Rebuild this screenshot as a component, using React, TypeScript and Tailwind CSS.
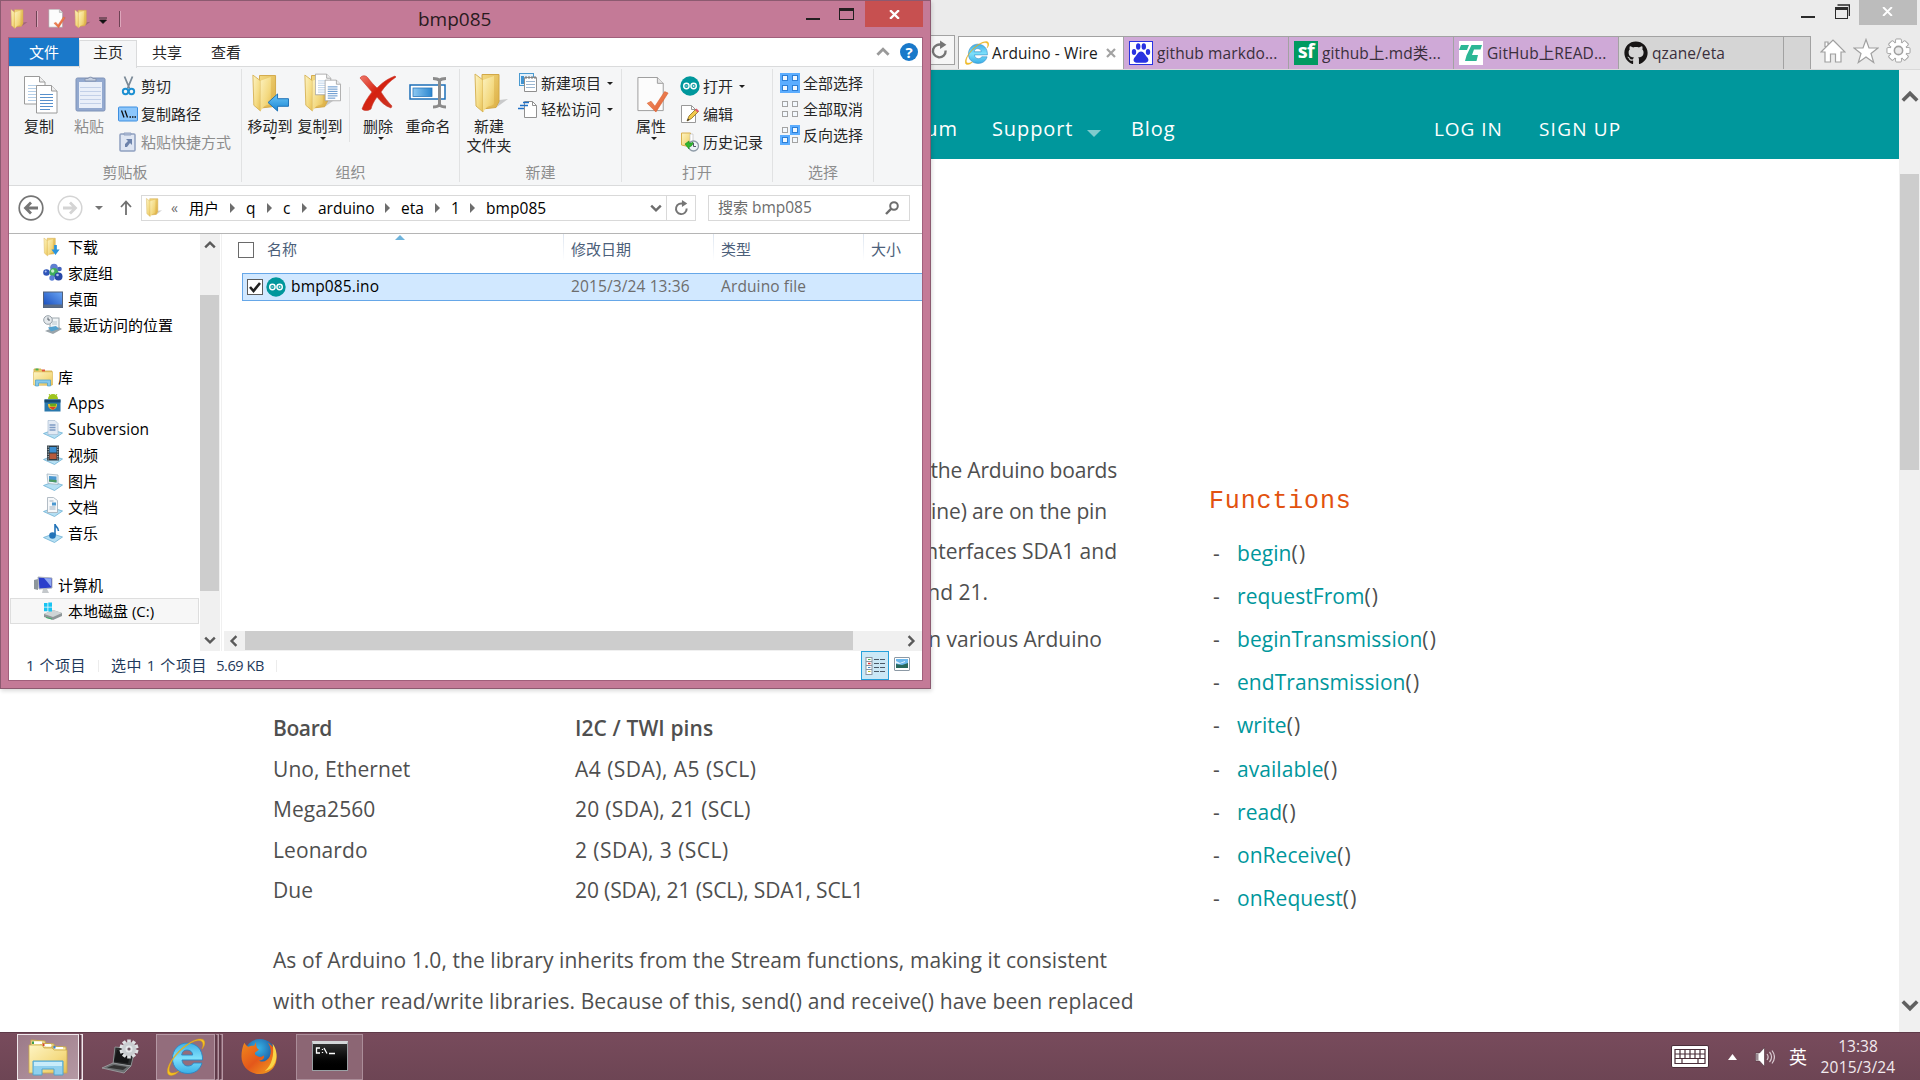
import type { ReactNode } from "react";
import { FaGithub } from "react-icons/fa";

/* ---------- shared gradients ---------- */

function Gradients() {
  return (
    <svg className="absolute h-0 w-0" aria-hidden="true">
      <defs>
        <linearGradient id="gFlap" x1="0" y1="0" x2="1" y2="1">
          <stop offset="0" stopColor="#fdf4c4" />
          <stop offset="0.6" stopColor="#f5dc85" />
          <stop offset="1" stopColor="#e6bf55" />
        </linearGradient>
        <linearGradient id="gBack" x1="0" y1="0" x2="1" y2="1">
          <stop offset="0" stopColor="#f3da84" />
          <stop offset="1" stopColor="#dcae42" />
        </linearGradient>
        <linearGradient id="gBlue" x1="0" y1="0" x2="0" y2="1">
          <stop offset="0" stopColor="#6cc6f7" />
          <stop offset="1" stopColor="#1a86d4" />
        </linearGradient>
        <linearGradient id="gRed" x1="0" y1="0" x2="1" y2="1">
          <stop offset="0" stopColor="#f0796b" />
          <stop offset="0.45" stopColor="#d5210f" />
          <stop offset="1" stopColor="#c93a2a" />
        </linearGradient>
        <linearGradient id="gCheck" x1="0" y1="0" x2="1" y2="1">
          <stop offset="0" stopColor="#f39b6d" />
          <stop offset="1" stopColor="#e0562a" />
        </linearGradient>
        <linearGradient id="gSel" x1="0" y1="0" x2="1" y2="0">
          <stop offset="0" stopColor="#8cc8f2" />
          <stop offset="1" stopColor="#2b86cf" />
        </linearGradient>
        <linearGradient id="gIe" x1="0" y1="0" x2="0" y2="1">
          <stop offset="0" stopColor="#3fb0e8" />
          <stop offset="0.5" stopColor="#7ee0fb" />
          <stop offset="1" stopColor="#39aee6" />
        </linearGradient>
        <linearGradient id="gDesk" x1="0" y1="1" x2="1" y2="0">
          <stop offset="0" stopColor="#1447b8" />
          <stop offset="1" stopColor="#6aa6f5" />
        </linearGradient>
        <linearGradient id="gFox" x1="0" y1="0" x2="1" y2="1">
          <stop offset="0" stopColor="#f08a1c" />
          <stop offset="0.5" stopColor="#e4571b" />
          <stop offset="1" stopColor="#f4a81f" />
        </linearGradient>
        <radialGradient id="gGlobe" cx="0.45" cy="0.3" r="0.8">
          <stop offset="0" stopColor="#35b4e8" />
          <stop offset="1" stopColor="#142c7c" />
        </radialGradient>
      </defs>
    </svg>
  );
}

/* ---------- ribbon and navigation icons ---------- */

function Folder({ className }: { className: string }) {
  return (
    <svg viewBox="0 0 36 40" className={className}>
      <path d="M24 34l11-8-9 1z" fill="#000" opacity="0.18" />
      <path d="M9 1.5h17v27l-3 6L9 36z" fill="url(#gBack)" stroke="#d2a847" strokeWidth="1" />
      <path d="M2 1l8 6v32l-7-6z" fill="url(#gFlap)" stroke="#d8b55a" strokeWidth="1" />
      <path d="M10 7l11-4v27c0 3-4 2-7 4l-4 5z" fill="url(#gFlap)" opacity="0.9" />
    </svg>
  );
}

function Sheet({ x, y, lines }: { x: number; y: number; lines: string }) {
  return (
    <g transform={`translate(${x} ${y})`}>
      <path d="M0.5 0.5h15l5.500 5.500v22h-20.500z" fill="#fff" stroke="#9a9a9a" />
      <path d="M15.500 0.500v5.500h5.500" fill="#eee" stroke="#9a9a9a" />
      <path d="M4 9.500h13M4 12.500h13M4 15.500h13M4 18.500h13M4 21.500h13M4 24.500h10" stroke={lines} strokeWidth="1.200" />
    </g>
  );
}

function CopyIcon() {
  return (
    <svg viewBox="0 0 36 38" className="mt-1 ml-[5px] h-[38px] w-9">
      <Sheet x={0} y={0} lines="#b5cfe8" />
      <Sheet x={12} y={9} lines="#5790cc" />
    </svg>
  );
}

function PasteIcon() {
  return (
    <svg viewBox="0 0 32 38" className="mt-px ml-[3px] h-[38px] w-8">
      <rect x="1" y="3" width="29" height="33" rx="1.500" fill="#93a9cf" stroke="#7f93b8" />
      <rect x="4" y="7" width="23" height="26" fill="#e9eff9" />
      <path d="M5 12.500h21M5 16.500h21M5 20.500h21M5 24.500h21M5 28.500h21" stroke="#c2d0e8" />
      <path d="M10 6V3.500h3a3 3 0 0 1 5 0h3V6z" fill="#c4cfe0" stroke="#8795b0" />
    </svg>
  );
}

function CutIcon() {
  return (
    <svg viewBox="0 0 20 20" className="h-5 w-5">
      <path d="M6.500 0.500l5 12M14.500 0.500l-5 12" stroke="#7b8a97" strokeWidth="1.800" fill="none" />
      <circle cx="7.500" cy="15.500" r="2.700" fill="none" stroke="#1e90d2" strokeWidth="1.900" />
      <circle cx="13.500" cy="15.500" r="2.700" fill="none" stroke="#1e90d2" strokeWidth="1.900" />
    </svg>
  );
}

function PathIcon() {
  return (
    <svg viewBox="0 0 20 20" className="h-5 w-5">
      <rect x="0.500" y="3" width="19" height="14" rx="1" fill="#8cc6fb" stroke="#3d8fe0" />
      <path d="M3.500 6.500l2.500 7M7 6.500l2.500 7" stroke="#111" strokeWidth="1.300" />
      <path d="M11.500 13h1.500M14 13h1.500M16.500 13h1.500" stroke="#111" strokeWidth="1.500" />
    </svg>
  );
}

function PasteShortcutIcon() {
  return (
    <svg viewBox="0 0 20 20" className="h-5 w-5">
      <rect x="2" y="2" width="15" height="17" rx="1" fill="#dfe6f3" stroke="#8fa0c0" strokeWidth="1.500" />
      <path d="M6 3V1h7v2z" fill="#b6c2da" stroke="#8fa0c0" />
      <path d="M7 15v-3l3-3-2-2h6v6l-2-2-3 4z" fill="#6d83ab" />
    </svg>
  );
}

function MoveToIcon() {
  return (
    <span className="relative block h-10 w-[38px]">
      <Folder className="h-10 w-[34px]" />
      <svg viewBox="0 0 24 20" className="absolute top-5 left-4 h-[19px] w-[23px]">
        <path d="M1 10L11 1v5h11.500v8H11v5z" fill="url(#gBlue)" stroke="#1a6fb5" />
      </svg>
    </span>
  );
}

function CopyToIcon() {
  return (
    <span className="relative ml-1 block h-10 w-[38px]">
      <Folder className="h-10 w-[34px]" />
      <svg viewBox="0 0 36 38" className="absolute top-0 left-3 h-[30px] w-[27px]">
        <Sheet x={0} y={0} lines="#b5cfe8" />
        <Sheet x={13} y={8} lines="#4f88c6" />
      </svg>
    </span>
  );
}

function DeleteIcon() {
  return (
    <svg viewBox="0 0 38 36" className="h-9 w-[38px]">
      <path
        d="M1 3c2-3 6-3 8 0 3 4 6 7 9 10C23 8 28 4 36 1l1 1c-6 4-11 9-15 15 4 6 7 10 11 14l-1 2c-6-2-10-6-14-11-3 4-5 8-6 12-3 2-7 2-9 0 2-6 6-12 10-17C9 12 5 8 1 3z"
        fill="url(#gRed)"
        stroke="#c9392b"
        strokeWidth="0.600"
      />
    </svg>
  );
}

function RenameIcon() {
  return (
    <svg viewBox="0 0 38 34" className="h-[34px] w-[38px]">
      <rect x="1" y="9" width="35" height="14" fill="#fff" stroke="#1c6fb8" strokeWidth="1.500" />
      <rect x="4" y="12" width="19" height="8.500" fill="url(#gSel)" stroke="#2b78bb" strokeWidth="0.800" />
      <path d="M24 2.500c3 0 5 0.500 6.500 2 1.500-1.500 3.500-2 6.500-2M24 31c3 0 5-0.500 6.500-2 1.500 1.500 3.500 2 6.500 2M30.500 4v25" fill="none" stroke="#8b8b8b" strokeWidth="3" />
    </svg>
  );
}

function NewItemIcon() {
  return (
    <svg viewBox="0 0 20 20" className="h-5 w-5">
      <rect x="1.500" y="0.500" width="14" height="12" fill="#e3f1fb" stroke="#4a9ad0" />
      <path d="M3 3h3v8H3z" fill="#3f93d1" />
      <path d="M6.500 4.500h12v14h-12z" fill="#fff" stroke="#8f8f8f" />
      <path d="M8 8.500h9M8 11.500h9M8 14.500h9" stroke="#9db8d2" />
      <path d="M8 3v3M11 3v3M14 3v3M17 3v3" stroke="#777" />
    </svg>
  );
}

function EasyAccessIcon() {
  return (
    <svg viewBox="0 0 20 20" className="h-5 w-5">
      <path d="M6.500 2.500h8l4 4v12h-12z" fill="#fff" stroke="#909090" />
      <path d="M14.500 2.500v4h4" fill="none" stroke="#909090" />
      <path d="M5 3.500h6M2 6.500h8M0 9.500h6" stroke="#1e70c8" strokeWidth="1.500" />
    </svg>
  );
}

function PropertiesIcon({ className }: { className: string }) {
  return (
    <svg viewBox="0 0 32 38" className={className}>
      <path d="M0.500 0.500h20l6 6v28h-26z" fill="#fcfcfc" stroke="#9c9c9c" />
      <path d="M20.500 0.500v6h6" fill="#e4e4e4" stroke="#9c9c9c" />
      <path d="M10 27l4-2 4 5 10-15 3.500 1.500L19 36z" fill="url(#gCheck)" stroke="#d9612f" strokeWidth="0.600" />
    </svg>
  );
}

function ArduinoIcon() {
  return (
    <svg viewBox="0 0 20 20" className="h-5 w-5">
      <circle cx="10" cy="10" r="9.700" fill="#00979c" />
      <circle cx="6.400" cy="10" r="2.700" fill="none" stroke="#fff" strokeWidth="1.400" />
      <circle cx="13.600" cy="10" r="2.700" fill="none" stroke="#fff" strokeWidth="1.400" />
      <path d="M5.300 10h2.200M12.500 10h2.200M13.600 8.900v2.200" stroke="#fff" strokeWidth="0.700" />
    </svg>
  );
}

function EditIcon() {
  return (
    <svg viewBox="0 0 20 20" className="h-5 w-5">
      <path d="M1.500 1.500h10l4 4v13h-14z" fill="#fff" stroke="#999" />
      <path d="M11.500 1.500v4h4" fill="none" stroke="#999" />
      <path d="M7 17l2-5 7-7 2.500 2.500-7 7z" fill="#f2c94c" stroke="#8a6a1c" strokeWidth="0.800" />
      <path d="M15 6l1.500-1.500 2.500 2.500L17.500 8.500z" fill="#e0556b" />
      <path d="M7 17l1-2.500 1.500 1.500z" fill="#333" />
    </svg>
  );
}

function HistoryIcon() {
  return (
    <svg viewBox="0 0 20 20" className="h-5 w-5">
      <path d="M1.500 1h9v14l-9-2z" fill="url(#gFlap)" stroke="#d8b04c" />
      <path d="M10 2h3v8h-3z" fill="#fff" stroke="#bbb" strokeWidth="0.600" />
      <circle cx="13.500" cy="14" r="5" fill="#eef3f7" stroke="#8d9aa6" strokeWidth="1.300" />
      <path d="M13.500 11v3.500h2.500" fill="none" stroke="#556" />
      <path d="M5 12l4-3v2c2 0 3 0 4-1 0 3-1.500 4.500-4 5v2z" fill="#2fb52f" stroke="#188a18" strokeWidth="0.600" />
    </svg>
  );
}

function SelectIcon({ on }: { on: boolean[] }) {
  const cells = [
    [0, 0],
    [10, 0],
    [0, 10],
    [10, 10],
  ];
  return (
    <svg viewBox="0 0 20 20" className="h-5 w-5">
      {cells.map(([x, y], i) => (
        <g key={i} transform={`translate(${x} ${y})`}>
          {on[i] && <rect width="10" height="10" fill="#5cadff" />}
          <rect x="2.500" y="2.500" width="5" height="5" fill="#f3f8fd" stroke={on[i] ? "#2d7fd6" : "#a3a3a3"} />
        </g>
      ))}
    </svg>
  );
}

function DownloadsIcon() {
  return (
    <span className="relative block h-5 w-5">
      <Folder className="h-5 w-[17px]" />
      <svg viewBox="0 0 10 12" className="absolute top-[7px] left-2 h-3 w-[9px]">
        <path d="M3.500 0.500h3v5h3L5 11.500 0.500 5.500h3z" fill="#2b94dd" />
      </svg>
    </span>
  );
}

function HomegroupIcon() {
  return (
    <svg viewBox="0 0 20 20" className="h-5 w-5">
      <circle cx="11" cy="4.500" r="3.800" fill="#5f7fd0" />
      <circle cx="3.500" cy="9.500" r="3.300" fill="#2f55b8" />
      <circle cx="11" cy="9.500" r="4.500" fill="#3fae5c" />
      <circle cx="9.700" cy="8" r="1.700" fill="#c6efcd" />
      <circle cx="15.500" cy="13.500" r="4" fill="#2747a6" />
      <circle cx="14.500" cy="12" r="1.300" fill="#aebff0" />
      <circle cx="9" cy="15" r="2.700" fill="#5c7fd6" />
      <circle cx="2.700" cy="8.500" r="1" fill="#aebff0" />
      <circle cx="16.500" cy="6" r="2.300" fill="#4262bc" />
    </svg>
  );
}

function DesktopIcon() {
  return (
    <svg viewBox="0 0 20 20" className="h-5 w-5">
      <rect x="0.500" y="3" width="19" height="15.500" fill="url(#gDesk)" stroke="#51617b" />
      <rect x="0.500" y="15.500" width="19" height="3" fill="#5b6c85" />
    </svg>
  );
}

function RecentIcon() {
  return (
    <svg viewBox="0 0 20 20" className="h-5 w-5">
      <path d="M2 16l12-5 5 3-9 5z" fill="#9aa4aa" />
      <rect x="7" y="3" width="9" height="10" fill="#f1f5f7" stroke="#9fa9af" />
      <path d="M9 7h5M9 9h5" stroke="#b9c6cd" />
      <path d="M5 12.500l8-1.500 3 3-8 2.500z" fill="#54a2cf" />
      <circle cx="5" cy="5" r="4.300" fill="#e5e9ec" stroke="#96a0a8" />
      <path d="M5 2.500V5h2" fill="none" stroke="#56616a" />
    </svg>
  );
}

function LibraryIcon() {
  return (
    <svg viewBox="0 0 20 20" className="h-5 w-5">
      <path d="M1 2h7l1 2h10v14H1z" fill="#eccb6a" stroke="#cfa745" strokeWidth="0.800" />
      <path d="M2.500 1.500h3v2h-3z" fill="#4caf50" />
      <path d="M9 2.500h3v2H9z" fill="#e0533c" />
      <path d="M0.500 5h19v13h-19z" fill="url(#gFlap)" stroke="#dab95c" strokeWidth="0.500" />
      <path d="M2.500 19v-6h15v6h-3v-3h-9v3z" fill="#86c8ea" stroke="#4b9fcd" strokeWidth="0.700" />
    </svg>
  );
}

function AppsIcon() {
  return (
    <svg viewBox="0 0 20 20" className="h-5 w-5">
      <path d="M5 6a5 5 0 0 1 10 0z" fill="#9ec51f" />
      <path d="M6 1l2 3M14 1l-2 3" stroke="#9ec51f" />
      <rect x="1.500" y="6.500" width="16" height="12" fill="#2a78ac" />
      <rect x="1.500" y="6.500" width="16" height="3" fill="#174a70" />
      <path d="M5 11h9c0 4-2 5-4.500 6C7 16 5 15 5 11z" fill="#f2c430" />
      <path d="M6.500 10.500h7l-1 3h-5z" fill="#6aa81e" />
      <path d="M6 14l4 3 3-3z" fill="#d8402c" />
    </svg>
  );
}

function Tray({ children }: { children: ReactNode }) {
  return (
    <svg viewBox="0 0 20 20" className="h-5 w-5">
      <path d="M0.500 14.500l9.500-3.500 9.500 3-8 5.500z" fill="#b5dff3" stroke="#6cb0d4" strokeWidth="0.800" />
      {children}
    </svg>
  );
}

function ComputerIcon() {
  return (
    <svg viewBox="0 0 20 20" className="h-5 w-5">
      <path d="M1 5l4-1v11l-4-1z" fill="#8e979c" />
      <path d="M5 2l14 1v10l-13 1z" fill="#2a3ecb" stroke="#b2b7bd" />
      <path d="M11 3l7 0.500v8z" fill="#8ea7f3" />
      <path d="M10 14h4l2 4H9z" fill="#c4c8cb" />
    </svg>
  );
}

function DriveIcon() {
  return (
    <svg viewBox="0 0 20 20" className="h-5 w-5">
      <path d="M1 13l9-4 9 3v3l-9 4-9-3z" fill="#8e9698" />
      <path d="M1 13l9-4 9 3-9 4z" fill="#cfd5d6" />
      <path d="M3 16l6 1.500v1L3 17z" fill="#3fae6a" />
      <path d="M1 2h3.500v3.800H1zM5.300 1.500H9v4.300H5.300zM1 6.600h3.500v3.600H1zM5.300 6.600H9v4H5.300z" fill="#18c4f2" />
    </svg>
  );
}

/* ---------- small glyphs ---------- */

function Chevron({ d, className }: { d: "up" | "down" | "left" | "right"; className: string }) {
  const pts = { up: "1,7 5,3 9,7", down: "1,3 5,7 9,3", left: "7,1 3,5 7,9", right: "3,1 7,5 3,9" }[d];
  return (
    <svg viewBox="0 0 10 10" className={className}>
      <polyline points={pts} fill="none" stroke="currentColor" strokeWidth="2" />
    </svg>
  );
}

function Caret({ className = "" }: { className?: string }) {
  return (
    <svg viewBox="0 0 6 3" className={`h-[3px] w-[6px] ${className}`}>
      <path d="M0 0h6L3 3z" fill="#1e1e1e" />
    </svg>
  );
}

function Crumb() {
  return (
    <svg viewBox="0 0 5 10" className="h-[10px] w-[5px]">
      <path d="M0 0l5 5-5 5z" fill="#6d6d6d" />
    </svg>
  );
}

function Reload({ className }: { className: string }) {
  return (
    <svg viewBox="0 0 16 18" className={className}>
      <path d="M13.800 9.500a6 6 0 1 1-3.300-5" fill="none" stroke="#757575" strokeWidth="2.200" />
      <path d="M8.500 0l6 4-6 4z" fill="#757575" />
    </svg>
  );
}

function IeLogo({ className }: { className: string }) {
  return (
    <svg viewBox="0 0 38 38" className={className}>
      <path
        d="M20 5c9 0 16 6 15.500 17H15c0.500 4 3 6 6 6 2.500 0 4.500-1 5.500-3h8.500c-2 7-7.500 10.500-14 10.500-9 0-15.500-6-15.500-15S12 5 20 5zm0 7c-3 0-5 1.800-5.300 5h11c-0.300-3.200-2.500-5-5.700-5z"
        fill="url(#gIe)"
        stroke="#2a86c4"
        strokeWidth="0.900"
      />
      <path
        d="M35 11c2-5 1-9-4-8.500C24 3 11 13 5 23c-4 7-4 13 1 12 2 0 4-1 6-2-3 4-8 5.500-10.500 3.500C-2 33 3 22 12 13 20 5 31-1 36 1.500c3 2 2 6-1 9.500z"
        fill="#f7c322"
        stroke="#d99c12"
        strokeWidth="0.500"
      />
    </svg>
  );
}

/* ---------- explorer window ---------- */

function BigButton({ icon, lines, caret, muted }: { icon: ReactNode; lines: string[]; caret?: boolean; muted?: boolean }) {
  return (
    <div className={`flex w-[50px] shrink-0 flex-col items-center ${muted ? "text-[#8d8d8d]" : "text-[#262626]"}`}>
      <div className="flex h-10 items-center">{icon}</div>
      <div className="h-1" />
      {lines.map((l) => (
        <div key={l} className="leading-[19px] whitespace-nowrap">
          {l}
        </div>
      ))}
      {caret && <Caret className="mt-px ml-[5px]" />}
    </div>
  );
}

function SmallButton({ icon, label, caret, muted }: { icon: ReactNode; label: string; caret?: boolean; muted?: boolean }) {
  return (
    <div className={`flex h-5 items-center gap-[3px] leading-5 whitespace-nowrap ${muted ? "text-[#8d8d8d]" : "text-[#262626]"}`}>
      {icon}
      <span>{label}</span>
      {caret && <Caret className="ml-[3px]" />}
    </div>
  );
}

function Group({ label, width, children }: { label: string; width: string; children: ReactNode }) {
  return (
    <div className={`flex shrink-0 flex-col pt-1.5 ${width}`}>
      <div className="flex h-[89px]">{children}</div>
      <div className="text-center leading-5 text-[#8d8d8d]">{label}</div>
    </div>
  );
}

function Divider() {
  return <div className="mt-0.5 h-[113px] w-px shrink-0 bg-[#e1e2e3]" />;
}

function Ribbon() {
  return (
    <div className="flex h-[120px] border-y border-[#dadbdc] bg-[#f5f6f7]">
      <Group label="剪贴板" width="w-[232px]">
        <div className="w-[5px]" />
        <BigButton icon={<CopyIcon />} lines={["复制"]} />
        <BigButton icon={<PasteIcon />} lines={["粘贴"]} muted />
        <div className="ml-1 flex flex-col gap-2 pt-[3px]">
          <SmallButton icon={<CutIcon />} label="剪切" />
          <SmallButton icon={<PathIcon />} label="复制路径" />
          <SmallButton icon={<PasteShortcutIcon />} label="粘贴快捷方式" muted />
        </div>
      </Group>
      <Divider />
      <Group label="组织" width="w-[217px]">
        <div className="w-[3px]" />
        <BigButton icon={<MoveToIcon />} lines={["移动到"]} caret />
        <BigButton icon={<CopyToIcon />} lines={["复制到"]} caret />
        <div className="mr-[3px] ml-1 mt-3.5 h-[55px] w-px bg-[#e1e2e3]" />
        <BigButton icon={<DeleteIcon />} lines={["删除"]} caret />
        <BigButton icon={<RenameIcon />} lines={["重命名"]} />
      </Group>
      <Divider />
      <Group label="新建" width="w-[161px]">
        <div className="w-1" />
        <BigButton icon={<Folder className="ml-1 h-10 w-9" />} lines={["新建", "文件夹"]} />
        <div className="ml-1 flex flex-col gap-1.5">
          <SmallButton icon={<NewItemIcon />} label="新建项目" caret />
          <SmallButton icon={<EasyAccessIcon />} label="轻松访问" caret />
        </div>
      </Group>
      <Divider />
      <Group label="打开" width="w-[150px]">
        <div className="w-1" />
        <BigButton icon={<PropertiesIcon className="mt-1 ml-1 h-[37px] w-8" />} lines={["属性"]} caret />
        <div className="ml-1 flex flex-col gap-2 pt-[3px]">
          <SmallButton icon={<ArduinoIcon />} label="打开" caret />
          <SmallButton icon={<EditIcon />} label="编辑" />
          <SmallButton icon={<HistoryIcon />} label="历史记录" />
        </div>
      </Group>
      <Divider />
      <Group label="选择" width="w-[100px]">
        <div className="ml-[7px] flex flex-col gap-1.5">
          <SmallButton icon={<SelectIcon on={[true, true, true, true]} />} label="全部选择" />
          <SmallButton icon={<SelectIcon on={[false, false, false, false]} />} label="全部取消" />
          <SmallButton icon={<SelectIcon on={[false, true, true, false]} />} label="反向选择" />
        </div>
      </Group>
      <Divider />
    </div>
  );
}

const crumbs: [string, string][] = [
  ["用户", "w-[41px]"],
  ["q", "w-[21px]"],
  ["c", "w-[19px]"],
  ["arduino", "w-[67px]"],
  ["eta", "w-[34px]"],
  ["1", "w-[19px]"],
];

function AddressRow() {
  return (
    <div className="flex h-12 shrink-0 items-center border-b border-[#b5b5b5] pb-1 text-black">
      <svg viewBox="0 0 26 26" className="ml-[9px] h-[26px] w-[26px]">
        <circle cx="13" cy="13" r="11.800" fill="none" stroke="#757575" strokeWidth="1.700" />
        <path d="M20 13H8M13 7.500L7.500 13l5.500 5.500" fill="none" stroke="#757575" strokeWidth="2.800" />
      </svg>
      <svg viewBox="0 0 26 26" className="ml-[13px] h-[26px] w-[26px]">
        <circle cx="13" cy="13" r="11.800" fill="none" stroke="#d4d4d4" strokeWidth="1.500" />
        <path d="M6 13h12M13 7.500l5.500 5.500-5.500 5.500" fill="none" stroke="#d4d4d4" strokeWidth="2.800" />
      </svg>
      <svg viewBox="0 0 8 4" className="ml-3 h-1 w-2">
        <path d="M0 0h8L4 4z" fill="#757575" />
      </svg>
      <svg viewBox="0 0 12 16" className="ml-[17px] h-4 w-3">
        <path d="M6 15V2M1 7l5-5.500L11 7" fill="none" stroke="#707070" strokeWidth="1.800" />
      </svg>
      <div className="ml-[9px] flex h-[26px] w-[526px] items-center border border-[#d9d9d9] text-[15.500px] leading-6">
        <Folder className="ml-[3px] h-[19px] w-[18px]" />
        <span className="ml-2 w-[18px] text-sm text-[#6d6d6d]">«</span>
        {crumbs.map(([t, w]) => (
          <span key={t} className="flex items-center">
            <span className={`${w} ${t === "用户" ? "text-[15px]" : ""}`}>{t}</span>
            <span className="flex w-4">
              <Crumb />
            </span>
          </span>
        ))}
        <span className="tracking-[0.050px]">bmp085</span>
        <Chevron d="down" className="mr-1 ml-auto h-3 w-3 text-[#6d6d6d]" />
      </div>
      <div className="-ml-px flex h-[26px] w-[30px] items-center justify-center border border-[#d9d9d9]">
        <Reload className="h-4 w-[15px]" />
      </div>
      <div className="ml-3 flex h-[26px] w-[202px] items-center justify-between border border-[#d9d9d9] pr-2.5 pl-[9px] text-[#6d6d6d]">
        <span>
          搜索 <span className="text-[15.500px]">bmp085</span>
        </span>
        <svg viewBox="0 0 14 14" className="h-3.5 w-3.5">
          <circle cx="9" cy="5" r="3.800" fill="none" stroke="#6d6d6d" strokeWidth="2" />
          <path d="M6.300 7.700L1 13" stroke="#6d6d6d" strokeWidth="2.400" />
        </svg>
      </div>
    </div>
  );
}

const navItems: { icon?: ReactNode; label?: string; root?: boolean; selected?: boolean }[] = [
  { icon: <DownloadsIcon />, label: "下载" },
  { icon: <HomegroupIcon />, label: "家庭组" },
  { icon: <DesktopIcon />, label: "桌面" },
  { icon: <RecentIcon />, label: "最近访问的位置" },
  {},
  { icon: <LibraryIcon />, label: "库", root: true },
  { icon: <AppsIcon />, label: "Apps" },
  {
    icon: (
      <Tray>
        <path d="M5 1.500h7l3 3v11H5z" fill="#e2eaf4" stroke="#a9bdd3" strokeWidth="0.700" />
        <path d="M6.500 6h6M6.500 8.500h6M6.500 11h6" stroke="#7f9cc4" strokeWidth="1.300" />
      </Tray>
    ),
    label: "Subversion",
  },
  {
    icon: (
      <Tray>
        <rect x="4" y="0.500" width="12" height="15" fill="#2e3a42" />
        <rect x="6.500" y="2" width="7" height="5.500" fill="#3d8fd0" />
        <rect x="6.500" y="8.500" width="7" height="5.500" fill="#b65a3c" />
        <path d="M5.200 1.500v13M14.800 1.500v13" stroke="#cfd8dc" strokeDasharray="1.200 1.200" />
      </Tray>
    ),
    label: "视频",
  },
  {
    icon: (
      <Tray>
        <path d="M4 3l11 1v9.500l-10-1z" fill="#edf4f8" stroke="#9fb4c2" strokeWidth="0.800" />
        <path d="M6 5l7.500 0.500v6L6 10.500z" fill="#4b97cf" />
        <path d="M6 8.500l7.500 0.500v2.500L6 10.500z" fill="#4d9a62" />
      </Tray>
    ),
    label: "图片",
  },
  {
    icon: (
      <Tray>
        <path d="M4.500 0.500h6l4 3v12h-10z" fill="#f6f8fa" stroke="#a1adb8" strokeWidth="0.800" />
        <path d="M6.500 4h4M6.500 10h6M6.500 12h6" stroke="#9fb0c0" />
        <rect x="9" y="5.500" width="4" height="3" fill="#4b97cf" />
      </Tray>
    ),
    label: "文档",
  },
  {
    icon: (
      <Tray>
        <circle cx="9.500" cy="12.500" r="3.300" fill="#2273b8" />
        <path d="M12 12V1c0 3 3.500 3 3.500 7" fill="none" stroke="#2273b8" strokeWidth="1.600" />
      </Tray>
    ),
    label: "音乐",
  },
  {},
  { icon: <ComputerIcon />, label: "计算机", root: true },
  { icon: <DriveIcon />, label: "本地磁盘 (C:)", selected: true },
];

function NavPane() {
  return (
    <div className="flex w-[213px] shrink-0">
      <div className="w-[191px] pl-px text-black">
        {navItems.map((n, i) => (
          <div
            key={i}
            className={`mr-px flex h-[26px] items-center gap-[5px] border leading-6 whitespace-nowrap ${n.root ? "pl-[22px]" : "pl-8"} ${n.selected ? "border-[#dedede] bg-[#f7f7f7]" : "border-transparent"}`}
          >
            {n.icon}
            {n.label && <span className={/^[A-S]/.test(n.label) ? "text-[15.500px] tracking-[0.080px]" : ""}>{n.label}</span>}
          </div>
        ))}
      </div>
      <div className="flex w-5 flex-col items-center bg-[#f0f0f0]">
        <Chevron d="up" className="mt-[5px] h-3 w-3 text-[#5a5a5a]" />
        <div className="mt-11 mr-px h-[296px] w-[19px] bg-[#cdcdcd]" />
        <Chevron d="down" className="mt-auto mb-[5px] h-3 w-3 text-[#5a5a5a]" />
      </div>
      <div className="ml-px w-px bg-[#f0f0f0]" />
    </div>
  );
}

function FileList() {
  return (
    <div className="flex min-w-0 flex-1 flex-col">
      <div className="relative flex h-[27px] items-center text-[#4c607a]">
        <svg viewBox="0 0 10 5" className="absolute top-px left-[173px] h-[5px] w-[10px]">
          <path d="M0 5h10L5 0z" fill="#6fb4dc" />
        </svg>
        <span className="mt-1 ml-4 h-4 w-4 border border-[#6a6a6a] bg-white" />
        <span className="mt-1 ml-[13px] w-[296px]">名称</span>
        <span className="h-full w-px bg-gradient-to-b from-[#dde5f0] to-white" />
        <span className="mt-1 w-[149px] pl-[7px]">修改日期</span>
        <span className="h-full w-px bg-gradient-to-b from-[#dde5f0] to-white" />
        <span className="mt-1 w-[149px] pl-[7px]">类型</span>
        <span className="h-full w-px bg-gradient-to-b from-[#dde5f0] to-white" />
        <span className="mt-1 pl-[7px]">大小</span>
      </div>
      <div className="mt-3 ml-5 flex h-7 items-center border-y border-l border-[#66a7e8] bg-[#d1e8ff] text-[15.500px]">
        <span className="ml-1 flex h-4 w-4 items-center justify-center border border-[#5b5b5b] bg-white">
          <svg viewBox="0 0 12 12" className="h-3 w-3">
            <path d="M1 6l3.500 4L11 2" fill="none" stroke="#222" strokeWidth="2.600" />
          </svg>
        </span>
        <span className="mr-[5px] ml-[3px]">
          <ArduinoIcon />
        </span>
        <span className="w-[280px] tracking-[0.150px] text-black">bmp085.ino</span>
        <span className="w-[150px] tracking-[0.120px] text-[#6d6d6d]">2015/3/24 13:36</span>
        <span className="tracking-[0.120px] text-[#6d6d6d]">Arduino file</span>
      </div>
      <div className="mt-auto ml-0.5 flex h-5 items-center bg-[#f0f0f0] text-[#5a5a5a]">
        <Chevron d="left" className="ml-1 h-3 w-3" />
        <div className="mb-px ml-[5px] h-[19px] w-[608px] bg-[#cdcdcd]" />
        <Chevron d="right" className="mr-[5px] ml-auto h-3 w-3" />
      </div>
    </div>
  );
}

function StatusBar() {
  return (
    <div className="flex h-[29px] shrink-0 items-center text-[15px] text-[#1e395b]">
      <span className="ml-[17px] w-[72px] tracking-[0.500px]">1 个项目</span>
      <span className="h-3 w-px bg-[#ececec]" />
      <span className="ml-3 tracking-[0.600px]">选中 1 个项目</span>
      <span className="ml-[9px] w-[60px] text-[14.500px] tracking-[-0.400px]">5.69 KB</span>
      <span className="h-3 w-px bg-[#ececec]" />
      <span className="mr-[5px] ml-auto flex h-[29px] w-7 items-center justify-center border border-[#26a0da] bg-[#cbe8f6]">
        <svg viewBox="0 0 20 18" className="h-[18px] w-5">
          <rect x="1" y="0.500" width="6" height="17" fill="#fff" stroke="#8a94a0" />
          <path d="M1 4.500h6M1 8.500h6M1 12.500h6" stroke="#8a94a0" />
          <path d="M3 2.500h2.500" stroke="#4caf50" />
          <path d="M3 6.500h2.500" stroke="#d33" strokeWidth="1.500" />
          <path d="M3 10.500h2.500" stroke="#48c" />
          <path d="M3 14.500h2.500" stroke="#bb3" />
          <path d="M9 2.500h5M15 2.500h5M9 6.500h5M15 6.500h5M9 10.500h5M15 10.500h5M9 14.500h5M15 14.500h5" stroke="#4b5a68" />
        </svg>
      </span>
      <svg viewBox="0 0 16 14" className="mr-3 mb-1 h-3.5 w-4">
        <rect x="0.500" y="0.500" width="15" height="13" rx="0.500" fill="#fff" stroke="#8c99a5" />
        <rect x="2" y="2" width="12" height="6" fill="#6db9ee" />
        <path d="M2 7l6 1 6-2v5H2z" fill="#28685c" />
        <path d="M2 4l4 2 5-2v1l-6 2-3-1z" fill="#e8f5ff" />
      </svg>
    </div>
  );
}

function Explorer() {
  return (
    <div className="absolute top-0 left-0 flex h-[689px] w-[931px] flex-col border border-[#8c5a70] bg-[#c47a97] px-[7px] pb-[7px] font-['Open_Sans','Noto_Sans_CJK_SC',sans-serif] text-[15px] shadow-[1px_2px_4px_rgba(0,0,0,0.15)]">
      <div className="flex h-9 shrink-0">
        <Folder className="mt-2 ml-0.5 h-5 w-[18px]" />
        <span className="mt-2.5 ml-2 h-4 w-0.5 border-l border-[#6f4355] bg-[#dda6bb]" />
        <PropertiesIcon className="mt-2 ml-2.5 h-5 w-[18px]" />
        <Folder className="mt-2 ml-[8px] h-5 w-[17px]" />
        <svg viewBox="0 0 8 7" className="mt-4 ml-2 h-[7px] w-2">
          <path d="M0 1h8M0.500 3h7L4 6.500z" fill="#111" stroke="#111" strokeWidth="0.800" />
        </svg>
        <span className="mt-2.5 ml-3 h-4 w-0.5 border-l border-[#6f4355] bg-[#dda6bb]" />
        <span className="ml-[297px] w-[389px] text-[19px] leading-9 text-[#2a1a20]">bmp085</span>
        <span className="mt-4 -ml-[1px] mt-[17px] h-0.5 w-3.5 bg-[#231f20]" />
        <span className="mt-[7px] ml-[19px] h-3 w-[15px] border border-t-[3px] border-[#231f20]" />
        <span className="ml-auto flex h-[26px] w-[58px] items-center justify-center bg-[#c75050]">
          <svg viewBox="0 0 10 8" className="h-[9px] w-[11px]">
            <path d="M1 0l8 8M9 0L1 8" stroke="#fff" strokeWidth="2" />
          </svg>
        </span>
      </div>
      <div className="flex min-h-0 flex-1 flex-col overflow-hidden border border-[#a05f7b] bg-white">
        <div className="flex h-7 shrink-0 items-center text-[#262626]">
          <span className="flex h-7 w-[70px] items-center justify-center bg-[#1979ca] text-white">文件</span>
          <span className="z-10 mt-px flex h-7 w-[58px] translate-y-px items-center justify-center border-x border-t border-[#dadbdc] bg-[#f5f6f7] pb-1">
            主页
          </span>
          <span className="ml-[15px]">共享</span>
          <span className="ml-[29px]">查看</span>
          <Chevron d="up" className="ml-auto h-3.5 w-3.5 text-[#9a9a9a]" />
          <span className="mr-1 ml-2.5 flex h-[18px] w-[18px] items-center justify-center rounded-full bg-[#1979ca] text-[15px] leading-none font-bold text-white">
            ?
          </span>
        </div>
        <Ribbon />
        <AddressRow />
        <div className="flex min-h-0 flex-1">
          <NavPane />
          <FileList />
        </div>
        <StatusBar />
      </div>
    </div>
  );
}

/* ---------- browser ---------- */

function Tab({ icon, label, kind }: { icon: ReactNode; label: string; kind: string }) {
  return (
    <div className={`flex h-[33px] w-[165px] shrink-0 items-center border-t border-l border-[#a2a2a2] pl-[5px] whitespace-nowrap ${kind}`}>
      {icon}
      <span className="ml-1 overflow-hidden pt-0.5 text-[15.500px] tracking-[0.100px]">{label}</span>
    </div>
  );
}

function Gear() {
  const teeth = [0, 45, 90, 135, 180, 225, 270, 315];
  return (
    <svg viewBox="0 0 26 26" className="h-[25px] w-[25px]">
      {teeth.map((a) => (
        <rect key={a} x="10" y="1" width="6" height="6" rx="1" fill="#fff" stroke="#a0a0a0" transform={`rotate(${a} 13 13)`} />
      ))}
      <circle cx="13" cy="13" r="8.800" fill="#fff" stroke="#a0a0a0" />
      {teeth.map((a) => (
        <rect key={a} x="10.500" y="2.500" width="5" height="5" fill="#fff" transform={`rotate(${a} 13 13)`} />
      ))}
      <circle cx="13" cy="13" r="4.300" fill="#ebebeb" stroke="#a0a0a0" strokeWidth="1.600" />
    </svg>
  );
}

function BrowserChrome() {
  return (
    <div className="h-[70px] shrink-0 border-b border-[#d9d9d9] bg-[#ebebeb]">
      <div className="flex h-[35px] justify-end pr-[3px]">
        <span className="mt-4 h-0.5 w-3.5 bg-[#2b2b2b]" />
        <svg viewBox="0 0 15 15" className="mt-1 ml-5 h-[15px] w-[15px]">
          <path d="M2.500 1h12v11" fill="none" stroke="#2b2b2b" strokeWidth="1.600" />
          <rect x="0.500" y="4" width="12" height="10.500" fill="none" stroke="#2b2b2b" />
          <path d="M0 4.500h13" stroke="#2b2b2b" strokeWidth="3" />
        </svg>
        <span className="ml-[9px] flex h-[25px] w-[58px] items-center justify-center bg-[#bcbcbc] pr-0.5 pb-[3px]">
          <svg viewBox="0 0 10 8" className="h-[9px] w-[11px]">
            <path d="M1 0l8 8M9 0L1 8" stroke="#fff" strokeWidth="1.800" />
          </svg>
        </span>
      </div>
      <div className="flex pl-[925px]">
        <div className="flex h-[30px] w-[30px] items-center border border-[#a2a2a2] bg-[#f6f6f6] pl-[5px]">
          <Reload className="h-5 w-[17px]" />
        </div>
        <div className="mt-px ml-[3px] flex h-[33px] w-[165px] items-center border-t border-l border-[#a2a2a2] bg-white pl-1.5">
          <IeLogo className="h-6 w-6" />
          <span className="ml-[3px] w-[112px] pt-0.5 text-[15.500px] tracking-[0.120px] whitespace-nowrap text-[#1b1b1b]">Arduino - Wire</span>
          <svg viewBox="0 0 10 10" className="ml-0.5 h-2.5 w-2.5 shrink-0">
            <path d="M1 1l8 8M9 1L1 9" stroke="#a2a2a2" strokeWidth="2.200" />
          </svg>
        </div>
        <div className="mt-px flex text-[#3a2f3c]">
          <Tab
            kind="bg-[#cfa9d7]"
            label="github markdo..."
            icon={
              <svg viewBox="0 0 24 24" className="h-6 w-6">
                <rect x="0.500" y="0.500" width="23" height="23" fill="#fff" stroke="#2932e1" />
                <ellipse cx="5" cy="11" rx="2.200" ry="3" fill="#2932e1" />
                <ellipse cx="9.200" cy="5.500" rx="2.200" ry="3.200" fill="#2932e1" />
                <ellipse cx="14.800" cy="5.500" rx="2.200" ry="3.200" fill="#2932e1" />
                <ellipse cx="19" cy="11" rx="2.200" ry="3" fill="#2932e1" />
                <path d="M12 10.500c3 0 4 3.500 6 5.500 2.500 2.500 1.500 5.500-1.500 5.700h-9C4.500 21.500 3.500 18.500 6 16c2-2 3-5.500 6-5.500z" fill="#2932e1" />
              </svg>
            }
          />
          <Tab
            kind="bg-[#cfa9d7]"
            label="github上.md类..."
            icon={
              <span className="flex h-6 w-6 items-center justify-center bg-[#009a61] pb-1 text-[20px] leading-none font-bold tracking-[-0.500px] text-white">
                sf
              </span>
            }
          />
          <Tab
            kind="bg-[#cfa9d7]"
            label="GitHub上READ..."
            icon={
              <svg viewBox="0 0 24 24" className="h-6 w-6">
                <path d="M0 0h24v24H0z" fill="#fff" />
                <path d="M2 4h8l-2 5H0zM12.500 4H23l-1.500 4.500h-6.500L13 14h6l-1.500 6H6l1.500-5.500z" fill="#2bb795" />
              </svg>
            }
          />
          <Tab kind="bg-[#d5d5d5]" label="qzane/eta" icon={<FaGithub className="h-6 w-6 shrink-0 text-[#171515]" />} />
          <div className="h-[33px] w-7 border-x border-t border-[#a2a2a2] bg-[#d5d5d5]" />
        </div>
        <svg viewBox="0 0 26 26" className="mt-[3px] ml-[9px] h-[26px] w-[26px]">
          <path d="M1 14L13 2l3 3 0 0 9 9h-4v10h-5.500v-8h-5v8H5V14zM5 9V4h3v3" fill="#fff" stroke="#a0a0a0" strokeWidth="1.200" />
        </svg>
        <svg viewBox="0 0 26 26" className="mt-[3px] ml-[7px] h-[26px] w-[26px]">
          <path d="M13 1.500l3 8.500h9l-7 5.500 2.700 9L13 19l-7.700 5.500 2.700-9L1 10h9z" fill="#fff" stroke="#a0a0a0" strokeWidth="1.200" />
        </svg>
        <div className="mt-[3px] ml-[7px]">
          <Gear />
        </div>
      </div>
    </div>
  );
}

const board: [string, string, string][] = [
  ["Uno, Ethernet", "A4 (SDA), A5 (SCL)", "tracking-[0.470px]"],
  ["Mega2560", "20 (SDA), 21 (SCL)", "tracking-[0.300px]"],
  ["Leonardo", "2 (SDA), 3 (SCL)", "tracking-[0.450px]"],
  ["Due", "20 (SDA), 21 (SCL), SDA1, SCL1", "tracking-[-0.120px]"],
];

const functions = ["begin", "requestFrom", "beginTransmission", "endTransmission", "write", "available", "read", "onReceive", "onRequest"];

function Page() {
  return (
    <div className="min-w-0 flex-1 bg-white text-[21px] text-[#4f4f4f]">
      <nav className="flex h-[89px] items-center bg-[#00979c] pt-[29px] text-[20px] tracking-[0.900px] text-white">
        <span className="ml-[892px] w-[100px]">Forum</span>
        <span className="w-[95px]">Support</span>
        <svg viewBox="0 0 14 7" className="mt-2 h-[7px] w-3.5">
          <path d="M0 0h14L7 7z" fill="#80cbcd" />
        </svg>
        <span className="ml-[30px] w-[303px]">Blog</span>
        <span className="w-[105px] text-[19px] tracking-[0.950px]">LOG IN</span>
        <span className="text-[19px] tracking-[1.200px]">SIGN UP</span>
      </nav>
      <div className="flex pt-[291px] pl-[273px]">
        <main className="w-[936px] leading-[40.600px] whitespace-nowrap">
          <div className="flex w-[844px] flex-col items-end">
            <p className="tracking-[-0.200px]">the Arduino boards</p>
            <p className="mr-[10px] tracking-[-0.150px]">line) are on the pin</p>
            <p>interfaces SDA1 and</p>
            <p className="mr-[129px]">and 21.</p>
            <p className="mt-[7px] mr-[15px]">in various Arduino</p>
          </div>
          <table className="mt-12 border-collapse">
            <thead>
              <tr className="text-left">
                <th className="w-[302px] p-0 font-semibold tracking-[-0.400px]">Board</th>
                <th className="p-0 font-semibold tracking-[0.100px]">I2C / TWI pins</th>
              </tr>
            </thead>
            <tbody>
              {board.map(([name, pins, spacing]) => (
                <tr key={name}>
                  <td className="p-0 tracking-[0.080px]">{name}</td>
                  <td className={`p-0 ${spacing}`}>{pins}</td>
                </tr>
              ))}
            </tbody>
          </table>
          <p className="mt-[29px] tracking-[0.065px]">
            As of Arduino 1.0, the library inherits from the Stream functions, making it consistent
            <br />
            <span className="tracking-[0.110px]">
              with other read/write libraries. Because of this, send() and receive() have been replaced
            </span>
          </p>
        </main>
        <aside className="w-[300px] pt-[34px]">
          <h2 className="font-['Liberation_Mono',monospace] text-[25px] leading-[36px] tracking-[0.850px] text-[#e2520f]">Functions</h2>
          <ul className="mt-3">
            {functions.map((f) => (
              <li key={f} className="flex h-[43.150px] items-center">
                <span className="w-[28px] pl-1">-</span>
                <span className="tracking-[0.050px] text-[#00979c]">{f}</span>
                <span className="tracking-[1.200px]">()</span>
              </li>
            ))}
          </ul>
        </aside>
      </div>
    </div>
  );
}

function Browser() {
  return (
    <div className="flex h-[1032px] flex-col overflow-hidden font-['Open_Sans','Noto_Sans_CJK_SC',sans-serif]">
      <BrowserChrome />
      <div className="flex min-h-0 flex-1">
        <Page />
        <div className="flex w-[21px] flex-col items-center bg-[#f0f0f0] text-[#606060]">
          <Chevron d="up" className="mt-[18px] h-[18px] w-[18px]" />
          <div className="mt-[68px] h-[296px] w-[19px] bg-[#cdcdcd]" />
          <Chevron d="down" className="mt-auto mb-[18px] h-[18px] w-[18px]" />
        </div>
      </div>
    </div>
  );
}

/* ---------- taskbar ---------- */

function Taskbar() {
  const teeth = [0, 36, 72, 108, 144];
  return (
    <div className="flex h-12 items-center border-t border-[#5f3a49] bg-gradient-to-b from-[#784b5c] to-[#6d4554] pl-[17px] font-['Open_Sans','Noto_Sans_CJK_SC',sans-serif] text-white">
      <span className="flex h-[46px] w-[62px] items-center justify-center border border-[#f0e8ec] bg-gradient-to-br from-[#9c7a88] to-[#b599a4]">
        <svg viewBox="0 0 40 38" className="h-[38px] w-10">
          <path d="M3 2l14 1 1 5H3zM13 5l13 1v4H13zM24 8l14 1v4H24z" fill="#f7e9a8" stroke="#c9a84a" />
          <path d="M6 3.500h8v2.500H6zM16 6h7v2.500h-7zM27 9h8v2h-8z" fill="#fff" />
          <path d="M4 3.500h2v2.500H4z" fill="#3f9e4a" />
          <path d="M14.500 5.500h2v2.500h-2z" fill="#d9452e" />
          <path d="M25.500 8h2v2.500h-2z" fill="#3b82d0" />
          <path d="M1 7h13l2 3h8l2 2h13v23H1z" fill="url(#gFlap)" stroke="#cda948" strokeWidth="0.800" />
          <path d="M5 37V23h30v14h-9v-6H14v6z" fill="#8fd0ee" stroke="#4fa4cf" />
          <path d="M6 24h28v4H6z" fill="#c8ecfa" />
        </svg>
      </span>
      <span className="h-[46px] w-1 border border-l-2 border-[#f0e8ec] border-l-[#5f3a49] bg-[#a88b98]" />
      <svg viewBox="0 0 38 36" className="ml-[18px] h-9 w-[38px]">
        <path d="M14 8l20 2-4 17-18-2z" fill="#2b2d2e" stroke="#8b8f91" />
        <path d="M16 11l14 1.500-3 12-14-2z" fill="#151617" />
        <path d="M1 29l11-5 18 3-7 7z" fill="#6b6e70" stroke="#a2a5a7" strokeWidth="0.800" />
        <path d="M6 28.500l7-2.500 13 2-4 3z" fill="#333" />
        {teeth.map((a) => (
          <rect key={a} x="26.200" y="0.500" width="3.600" height="19" fill="#dfe2e4" transform={`rotate(${a} 28 10)`} />
        ))}
        <circle cx="28" cy="10" r="7" fill="#c9cdd0" />
        <circle cx="28" cy="10" r="3.500" fill="#e6e9eb" />
        <circle cx="28" cy="10" r="1.600" fill="#6b5560" />
      </svg>
      <span className="ml-[17px] flex h-[46px] w-[59px] items-center justify-center border border-[#b598a4] bg-[#936d7c]">
        <IeLogo className="h-[38px] w-[38px]" />
      </span>
      <span className="h-[46px] w-1 border border-l-2 border-[#b598a4] border-l-[#5f3a49] bg-[#8b6473]" />
      <span className="h-[46px] w-1 border border-l-2 border-[#b598a4] border-l-[#5f3a49] bg-[#8b6473]" />
      <svg viewBox="0 0 38 38" className="ml-[17px] h-[37px] w-[38px]">
        <circle cx="20" cy="17" r="16" fill="url(#gGlobe)" />
        <path
          d="M4 5c1 2 2 3 4 4 2-1 4-1 6-1l2-4c0 3 0 6 3 8l-4 3c-1 2 1 3 3 4 3 1 4 0 6-1 1 3-2 5-5 5 4 3 9 0 11-4 2-5 1-10-2-14 6 4 10 9 9 17C36 31 29 37 20 37 9 37 1 29 1 19 1 14 2 9 4 5z"
          fill="url(#gFox)"
        />
        <path d="M33 6c4 5 5 12 3 18-2 6-6 9-11 10 7-6 10-16 8-28z" fill="#f9d648" />
      </svg>
      <span className="ml-[18px] flex h-[46px] w-[67px] items-center justify-center border border-[#ab8d99] bg-[#8c6674]">
        <span className="mb-0.5 flex h-[30px] w-9 flex-col border-x border-b border-[#9aa0a4] border-t-[3px] border-t-[#d4d7d9] bg-gradient-to-b from-[#303030] to-black">
          <svg viewBox="0 0 34 14" className="h-3.5 w-[34px]">
            <path d="M7 4H3.500v5H7M9.500 5v1M9.500 8v1M11 4l3 5.500M16 9.500h6" fill="none" stroke="#fff" strokeWidth="1.300" />
          </svg>
        </span>
      </span>
      <svg viewBox="0 0 38 23" className="ml-auto h-[23px] w-[38px]">
        <rect x="0.500" y="0.500" width="37" height="22" rx="1.500" fill="#fff" stroke="#4a2f3a" />
        <path d="M4 4.500h30v14H4zM4 9h30M4 13.500h30M9 4.500v9M14 4.500v9M19 4.500v9M24 4.500v9M29 4.500v9M11 13.500v5M27 13.500v5" fill="none" stroke="#4a2f3a" strokeWidth="1.200" />
      </svg>
      <svg viewBox="0 0 9 6" className="ml-[19px] h-1.5 w-[9px]">
        <path d="M0 6h9L4.500 0z" fill="#fff" />
      </svg>
      <svg viewBox="0 0 20 20" className="ml-[18px] h-5 w-5">
        <path d="M0.500 6h4l5-5.500v19l-5-5.500h-4z" fill="#fff" stroke="#4a2f3a" strokeWidth="0.600" />
        <path d="M1 6.500h2.500v7H1z" fill="#9a8a92" />
        <path d="M12 7c1.500 2 1.500 4 0 6M14.500 5c2.500 3 2.500 7 0 10M17 3.500c3 4 3 9 0 13" fill="none" stroke="#d8c8cf" strokeWidth="1.200" />
      </svg>
      <span className="ml-[14px] text-[18px] leading-5">英</span>
      <span className="ml-[13px] flex w-[76px] flex-col items-center pt-px text-[15.500px] leading-[21px] text-[#f2eaee]">
        <span>13:38</span>
        <span className="tracking-[0.150px]">2015/3/24</span>
      </span>
      <span className="w-[24px]" />
    </div>
  );
}

export default function App() {
  return (
    <div className="relative h-[1080px] w-[1920px] overflow-hidden bg-white">
      <Gradients />
      <Browser />
      <Taskbar />
      <Explorer />
    </div>
  );
}
